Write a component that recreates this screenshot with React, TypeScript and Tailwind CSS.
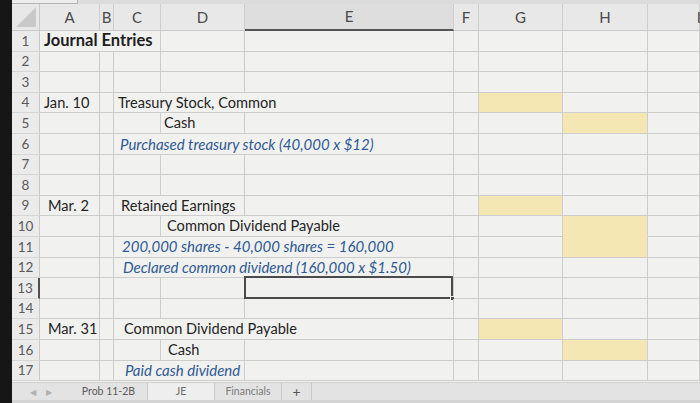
import React from "react";

type Seg = { col: number; span: number; text: string; kind?: "bold" | "note" | "plain"; pad?: number };

const colWidths = [60, 14, 47, 84, 209, 25, 84, 85, 0];
const colNames = ["A", "B", "C", "D", "E", "F", "G", "H", "I"];

const rows: Seg[][] = [
    [{ col: 0, span: 3, text: "Journal Entries", kind: "bold" }],
    [],
    [],
    [{ col: 0, span: 1, text: "Jan. 10" }, { col: 2, span: 3, text: "Treasury Stock, Common" }],
    [{ col: 3, span: 1, text: "Cash", pad: 3 }],
    [{ col: 2, span: 3, text: "Purchased treasury stock (40,000 x $12)", kind: "note", pad: 6 }],
    [],
    [],
    [{ col: 0, span: 1, text: "Mar. 2", pad: 8 }, { col: 2, span: 2, text: "Retained Earnings", pad: 7 }],
    [{ col: 3, span: 2, text: "Common Dividend Payable", pad: 6 }],
    [{ col: 2, span: 3, text: "200,000 shares - 40,000 shares = 160,000", kind: "note", pad: 8 }],
    [{ col: 2, span: 3, text: "Declared common dividend (160,000 x $1.50)", kind: "note", pad: 9 }],
    [],
    [],
    [{ col: 0, span: 1, text: "Mar. 31", pad: 8 }, { col: 2, span: 3, text: "Common Dividend Payable", pad: 10 }],
    [{ col: 3, span: 1, text: "Cash", pad: 7 }],
    [{ col: 2, span: 2, text: "Paid cash dividend", kind: "note", pad: 11 }],
];

// yellow answer cells: row number -> column index
const yellow: Record<number, number[]> = { 4: [6], 5: [7], 9: [6], 10: [7], 11: [7], 15: [6], 16: [7] };

function Row({ n, segs }: { n: number; segs: Seg[] }) {
    const cells: React.ReactNode[] = [];
    let c = 0;
    while (c < colWidths.length) {
        const seg = segs.find((s) => s.col === c);
        const span = seg ? seg.span : 1;
        let w = 0;
        for (let i = c; i < c + span; i++) w += colWidths[i];
        const last = c + span >= colWidths.length;
        const isYellow = (yellow[n] || []).includes(c);
        const yellowBelow = isYellow && (yellow[n + 1] || []).includes(c);
        const selected = n === 13 && c === 4;
        let text = "";
        if (seg?.kind === "bold") text = "font-bold text-[16.5px] text-[#1e1e1e]";
        else if (seg?.kind === "note") text = "italic text-[15px] text-[#2f5a93]";
        else text = "text-[14.6px] text-[#242424]";
        cells.push(
            <div
                key={c}
                className={`relative h-full shrink-0 border-r border-b flex items-center whitespace-nowrap overflow-visible ${isYellow ? "bg-[#f4e7b3]" : ""} ${yellowBelow ? "border-b-[#f4e7b3] border-r-[#cdcdcd]" : "border-[#cdcdcd]"} ${last ? "flex-1" : ""}`}
                style={last ? undefined : { width: w }}
            >
                {seg && (
                    <span className={text} style={{ paddingLeft: seg.pad ?? 4 }}>
                        {seg.text}
                    </span>
                )}
                {selected && (
                    <div className="absolute -left-px -top-[2px] right-0 -bottom-px border-2 border-[#4a4a4a]">
                        <div className="absolute -right-[4px] -bottom-[4px] w-[5px] h-[5px] bg-[#4a4a4a] border border-[#f1f1f0]" />
                    </div>
                )}
            </div>
        );
        c += span;
    }
    return (
        <div className="flex h-[20.6px]">
            <div
                className={`w-[28px] shrink-0 h-full flex items-center justify-center text-[13.5px] text-[#5a5a5a] border-b border-[#d6d6d6] bg-[#ebebeb] ${n === 13 ? "border-r-2 border-r-[#505050]" : "border-r border-r-[#c9c9c9]"}`}
            >
                {n}
            </div>
            {cells}
        </div>
    );
}

export default function App() {
    return (
        <div className="flex w-[700px] h-[403px] overflow-hidden bg-[#f1f1f0]" style={{ fontFamily: "Lato, 'Open Sans', sans-serif" }}>
            <div className="w-[12px] shrink-0 bg-[#161616]" />
            <div className="flex-1 flex flex-col min-w-0">
                <div className="h-[4px] bg-[#dcdcdc] flex">
                    <div className="w-[66px] border-b border-r border-[#b5b5b5] bg-[#ededed]" />
                </div>
                <div className="flex h-[27px] bg-[#e8e8e8] text-[15px] text-[#4a4a4a]">
                    <div className="w-[28px] shrink-0 border-r border-b border-[#c9c9c9] relative overflow-hidden">
                        <div
                            className="absolute right-[3px] bottom-[3px] w-[20px] h-[20px] bg-[#c9c9c9]"
                            style={{ clipPath: "polygon(100% 0, 100% 100%, 0 100%)" }}
                        />
                    </div>
                    {colNames.map((name, i) => {
                        const last = i === colNames.length - 1;
                        const sel = i === 4;
                        return (
                            <div
                                key={name}
                                className={`shrink-0 h-full flex items-center justify-center border-r border-[#cdcdcd] ${sel ? "bg-[#dedede] border-b-2 border-b-[#555]" : "border-b border-b-[#c9c9c9]"} ${last ? "flex-1 justify-end" : ""}`}
                                style={last ? undefined : { width: colWidths[i] }}
                            >
                                {last ? <span className="-mr-[2px]">{name}</span> : name}
                            </div>
                        );
                    })}
                </div>
                {rows.map((segs, i) => (
                    <Row key={i} n={i + 1} segs={segs} />
                ))}
                <div className="flex h-[18px] mt-[1px] bg-[#e3e3e3] items-stretch text-[10.5px] text-[#5c5c5c] border-t border-[#d0d0d0]">
                    <div className="w-[58px] shrink-0 flex items-center gap-[10px] pl-[18px] text-[8px] text-[#b0b0b0]">
                        <span>◀</span>
                        <span>▶</span>
                    </div>
                    <div className="w-[78px] shrink-0 flex items-center justify-center border-r border-[#c8c8c8]">Prob 11-2B</div>
                    <div className="w-[67px] shrink-0 flex items-center justify-center bg-[#eeeeee] border-r border-[#c8c8c8] text-[#6a6a6a]">JE</div>
                    <div className="w-[67px] shrink-0 flex items-center justify-center border-r border-[#c8c8c8] text-[#7a7a7a]">Financials</div>
                    <div className="w-[30px] shrink-0 flex items-center justify-center border-r border-[#c8c8c8] text-[14px] text-[#555]">+</div>
                    <div className="flex-1" />
                </div>
                <div className="flex-1 bg-[#d4d4d4]" />
            </div>
        </div>
    );
}
